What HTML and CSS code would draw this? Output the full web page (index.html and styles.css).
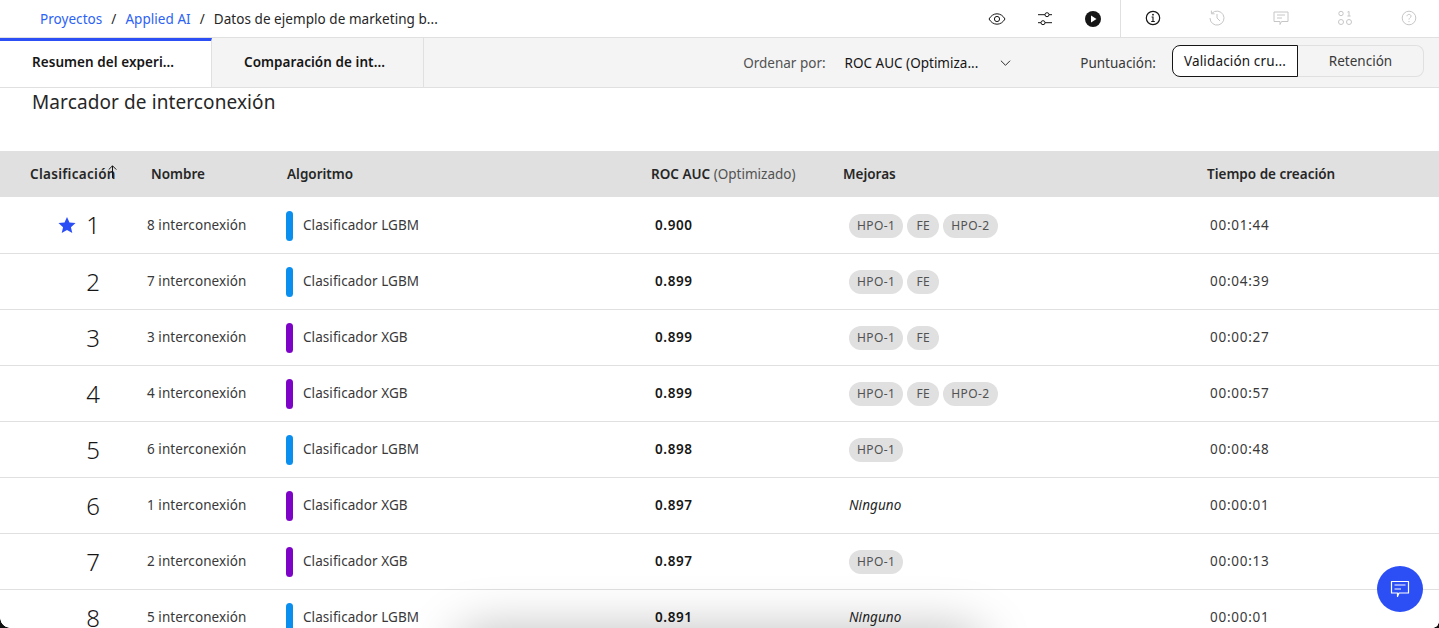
FILE: index.html

```html
<!DOCTYPE html>
<html lang="es">
<head>
  <meta charset="UTF-8">
  <title>Marcador de interconexión</title>
  <link rel="stylesheet" href="styles.css">
</head>
<body>
  <header class="topbar">
    <nav class="crumbs">
      <a href="#">Proyectos</a><span class="sep">/</span><a href="#">Applied AI</a><span class="sep">/</span><span>Datos de ejemplo de marketing b...</span>
    </nav>
    <div class="tools">
      <svg class="icon" viewBox="0 0 18 18" fill="none" stroke="#161616"><path d="M1 9C3 5.6 5.8 3.8 9 3.8S15 5.6 17 9C15 12.4 12.2 14.2 9 14.2S3 12.4 1 9Z"/><circle cx="9" cy="9" r="2.6"/></svg>
      <svg class="icon" viewBox="0 0 18 18" fill="none" stroke="#161616"><path d="M2 4.7H9M13 4.7H16M2 12.7H5M9 12.7H16"/><circle cx="11" cy="4.7" r="2"/><circle cx="7" cy="12.7" r="2"/></svg>
      <svg class="icon" viewBox="0 0 18 18"><circle cx="9" cy="9" r="8" fill="#161616"/><path d="M7 5.5 12.5 9 7 12.5Z" fill="#fff"/></svg>
    </div>
    <div class="tools tools-side">
      <svg class="icon" viewBox="0 0 18 18" fill="none" stroke="#161616"><circle cx="9" cy="9" r="6.7" stroke-width="1.2"/><path d="M7.2 12.5H10.8M9 12.5V8H7.6" stroke-width="1.1"/><circle cx="9" cy="5.7" r=".9" fill="#161616" stroke="none"/></svg>
      <svg class="icon" viewBox="0 0 18 18" fill="none" stroke="#c6c6c6"><path d="M4 4.2A7 7 0 1 1 2 9"/><path d="M3.4 1.6V4.8H6.6M9 5V9L12 12"/></svg>
      <svg class="icon" viewBox="0 0 18 18" fill="none" stroke="#c6c6c6"><path d="M2 3H16V12.5H9.5L8 15.5V12.5H2Z"/><path d="M5 6H13M5 9H10"/></svg>
      <svg class="icon" viewBox="0 0 18 18" fill="none" stroke="#c6c6c6"><circle cx="5" cy="4.5" r="2.2"/><circle cx="5" cy="13" r="2.5"/><circle cx="13" cy="13" r="2.5"/><path d="M11.5 3.2 13 2.4V7M11.4 7H14.6"/></svg>
      <svg class="icon" viewBox="0 0 18 18" fill="none" stroke="#c6c6c6"><circle cx="9" cy="9" r="6.8"/><path d="M7 7.2C7 4.8 11 4.8 11 7.2 11 8.8 9 8.8 9 10.6"/><circle cx="9" cy="12.6" r=".7" fill="#c6c6c6" stroke="none"/></svg>
    </div>
  </header>

  <div class="tabbar">
    <div class="tab tab-active">Resumen del experi...</div>
    <div class="tab">Comparación de int...</div>
    <div class="sort">
      <span class="sort-label">Ordenar por:</span>
      <span class="sort-value">ROC AUC (Optimiza...</span>
      <svg class="chevron" viewBox="0 0 12 8" fill="none" stroke="#161616"><path d="M1 1.5 6 6.5 11 1.5"/></svg>
    </div>
    <div class="score">
      <span class="score-label">Puntuación:</span>
      <div class="switch">
        <div class="switch-item switch-on">Validación cru...</div>
        <div class="switch-item switch-off">Retención</div>
      </div>
    </div>
  </div>

  <h2 class="title">Marcador de interconexión</h2>

  <table class="board">
    <thead>
      <tr>
        <th class="c-rank">Clasificación<svg class="sort-up" viewBox="0 0 9 13" fill="none" stroke="#161616"><path d="M.7 4.6 4.5 .8 8.3 4.6M4.5 1V13"/></svg></th>
        <th class="c-name">Nombre</th>
        <th class="c-algo">Algoritmo</th>
        <th class="c-roc">ROC AUC <span class="muted">(Optimizado)</span></th>
        <th class="c-imp">Mejoras</th>
        <th class="c-time">Tiempo de creación</th>
      </tr>
    </thead>
    <tbody id="rows"></tbody>
  </table>

  <div class="footer-shadow"></div>
  <div class="corner corner-left"></div>
  <div class="corner corner-right"></div>

  <button class="chat">
    <svg viewBox="0 0 20 20" width="20" height="20" fill="none" stroke="#fff" stroke-width="1.2"><path d="M1.5 2.5H18.5V14H9L7.5 17.5V14H1.5Z" stroke-linejoin="round"/><path d="M4.5 6H15.5M4.5 10H11"/></svg>
  </button>

  <script>
    const pipelines = [
      ["8 interconexión", "LGBM", "0.900", ["HPO-1", "FE", "HPO-2"], "00:01:44"],
      ["7 interconexión", "LGBM", "0.899", ["HPO-1", "FE"], "00:04:39"],
      ["3 interconexión", "XGB", "0.899", ["HPO-1", "FE"], "00:00:27"],
      ["4 interconexión", "XGB", "0.899", ["HPO-1", "FE", "HPO-2"], "00:00:57"],
      ["6 interconexión", "LGBM", "0.898", ["HPO-1"], "00:00:48"],
      ["1 interconexión", "XGB", "0.897", [], "00:00:01"],
      ["2 interconexión", "XGB", "0.897", ["HPO-1"], "00:00:13"],
      ["5 interconexión", "LGBM", "0.891", [], "00:00:01"]
    ];
    const star = '<svg class="star" viewBox="0 0 16 16"><path d="M8 .8 10.2 5.8 15.6 6.3 11.5 9.9 12.7 15.2 8 12.4 3.3 15.2 4.5 9.9 .4 6.3 5.8 5.8Z" fill="#2c4ff5"/></svg>';
    const tbody = document.getElementById("rows");
    pipelines.forEach((p, i) => {
      const chips = p[3].length
        ? `<span class="chips">${p[3].map(c => `<span class="chip">${c}</span>`).join("")}</span>`
        : '<em class="none">Ninguno</em>';
      const row = tbody.insertRow();
      row.innerHTML = `
        <td class="c-rank"><span class="rank">${i === 0 ? star : ""}<span class="rank-num">${i + 1}</span></span></td>
        <td class="c-name">${p[0]}</td>
        <td class="c-algo"><span class="algo"><i class="bar bar-${p[1].toLowerCase()}"></i>Clasificador ${p[1]}</span></td>
        <td class="c-roc"><b>${p[2]}</b></td>
        <td class="c-imp">${chips}</td>
        <td class="c-time">${p[4]}</td>`;
    });
  </script>
</body>
</html>
```

FILE: styles.css

```css
* {
  box-sizing: border-box;
}

html, body {
  height: 628px;
  overflow: hidden;
}

body {
  margin: 0;
  background: #fff;
  color: #161616;
  font-family: "Noto Sans", Roboto, Arial, sans-serif;
  font-size: 14px;
  position: relative;
}

.topbar {
  display: flex;
  align-items: center;
  height: 38px;
  padding-left: 40px;
  border-bottom: 1px solid #e0e0e0;
}

.crumbs {
  flex: 1;
  font-size: 13.5px;
  letter-spacing: .05px;
  color: #262626;
}

.crumbs a {
  color: #2c62f5;
  text-decoration: none;
}

.sep {
  margin: 0 9px;
}

.tools {
  display: flex;
  align-items: center;
  gap: 30px;
  width: 137px;
  height: 100%;
  padding-left: 5px;
}

.tools-side {
  width: 319px;
  gap: 46px;
  padding: 0 0 1px 23px;
  border-left: 1px solid #e0e0e0;
}

.icon {
  width: 18px;
  height: 18px;
  flex: none;
}

.tabbar {
  display: flex;
  align-items: center;
  height: 50px;
  background: #f4f4f4;
  border-bottom: 1px solid #e0e0e0;
}

.tab {
  width: 212px;
  height: 49px;
  padding: 0 32px;
  line-height: 48px;
  font-size: 13.5px;
  font-weight: 600;
  letter-spacing: .06px;
  white-space: nowrap;
  border-right: 1px solid #e0e0e0;
}

.tab-active {
  background: #fff;
  border-top: 3px solid #2c4ff5;
  line-height: 42px;
}

.sort {
  display: flex;
  align-items: center;
  margin-left: auto;
  padding-top: 1px;
  font-size: 13.5px;
}

.sort-label {
  color: #525252;
  margin-right: 19px;
}

.chevron {
  width: 11px;
  height: 8px;
  margin-left: 22px;
  margin-right: 69px;
}

.score {
  display: flex;
  align-items: center;
  font-size: 13.5px;
  margin-right: 15px;
}

.score-label {
  color: #393939;
  margin-right: 16px;
}

.switch {
  display: flex;
  height: 32px;
  width: 252px;
  margin-bottom: 3px;
}

.switch-item {
  width: 126px;
  text-align: center;
  line-height: 31px;
}

.switch-on {
  background: #fff;
  border: 1px solid #161616;
  border-radius: 8px 0 0 8px;
  letter-spacing: .15px;
}

.switch-off {
  color: #393939;
  border: 1px solid #e0e0e0;
  border-left: 0;
  border-radius: 0 8px 8px 0;
}

.title {
  margin: 0;
  height: 63px;
  padding: 1px 0 0 32px;
  font-size: 19px;
  line-height: 26px;
  font-weight: 400;
  letter-spacing: .1px;
  color: #262626;
}

.board {
  border-collapse: collapse;
  table-layout: fixed;
  width: 1439px;
}

.board th {
  height: 46px;
  padding: 0 0 1px 16px;
  background: #e0e0e0;
  font-size: 13.5px;
  font-weight: 600;
  text-align: left;
  color: #262626;
  white-space: nowrap;
}

.board td {
  height: 56px;
  padding: 0;
  border-bottom: 1px solid #e0e0e0;
  font-size: 13.5px;
  letter-spacing: .07px;
  color: #393939;
  white-space: nowrap;
}

.board th.c-rank {
  width: 135px;
  padding-left: 30px;
  letter-spacing: .3px;
  position: relative;
}

.sort-up {
  position: absolute;
  left: 108px;
  top: 14px;
  width: 9px;
  height: 13px;
}

.board .c-name {
  width: 136px;
}

.board .c-algo {
  width: 364px;
}

.board .c-roc {
  width: 192px;
}

.board .c-imp {
  width: 364px;
}

.board td.c-name {
  padding-left: 12px;
}

.board td.c-algo {
  padding-left: 15px;
}

.board td.c-roc {
  padding-left: 20px;
  letter-spacing: .6px;
  color: #161616;
}

.board td.c-roc b {
  font-weight: 600;
}

.board td.c-imp {
  padding-left: 22px;
}

.board td.c-time {
  padding-left: 19px;
  letter-spacing: .75px;
}

.muted {
  font-weight: 400;
  color: #525252;
}

.rank {
  display: flex;
  align-items: center;
  justify-content: flex-end;
  width: 100px;
  color: #161616;
}

.rank-num {
  font-size: 24px;
  line-height: 28px;
  font-weight: 300;
  padding-top: 1px;
}

.star {
  width: 18px;
  height: 18px;
  margin-right: 10px;
}

.algo {
  display: flex;
  align-items: center;
}

.bar {
  width: 7px;
  height: 30px;
  margin-top: 2px;
  border-radius: 4px;
  margin-right: 10px;
}

.bar-lgbm {
  background: #0a8fef;
}

.bar-xgb {
  background: #7d04c7;
}

.chips {
  display: flex;
  gap: 4px;
  margin-top: 2px;
}

.chip {
  min-width: 32px;
  height: 24px;
  padding: 0 8px;
  border-radius: 12px;
  background: #e0e0e0;
  font-size: 12px;
  letter-spacing: .4px;
  line-height: 24px;
  text-align: center;
  color: #525252;
}

.none {
  color: #262626;
}

.footer-shadow {
  position: absolute;
  left: 463px;
  top: 636px;
  width: 514px;
  height: 40px;
  border-radius: 20px;
  box-shadow: 0 0 50px 8px rgba(0, 0, 0, 0.25);
}

.corner {
  position: absolute;
  bottom: 0;
}

.corner-left {
  left: 0;
  width: 10px;
  height: 10px;
  background: radial-gradient(circle at 100% 0, transparent 9.5px, #111 10px);
}

.corner-right {
  right: 0;
  width: 6px;
  height: 6px;
  background: radial-gradient(circle at 0 0, transparent 5.5px, #111 6px);
}

.chat {
  position: absolute;
  left: 1377px;
  top: 566px;
  width: 46px;
  height: 46px;
  border: 0;
  border-radius: 50%;
  background: #2c4ff5;
  display: flex;
  align-items: center;
  justify-content: center;
  padding: 0;
}
```
